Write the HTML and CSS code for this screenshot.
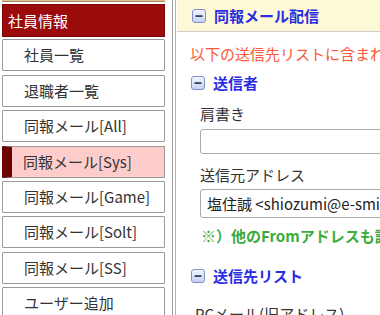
FILE: index.html
```html
<!DOCTYPE html>
<html lang="ja">
<head>
<meta charset="utf-8">
<link rel="stylesheet" href="styles.css">
</head>
<body>
<div class="page">
  <nav class="sidebar">
    <div class="top-stub"></div>
    <div class="side-head">社員情報</div>
    <ul class="menu">
      <li class="item">社員一覧</li>
      <li class="item">退職者一覧</li>
      <li class="item">同報メール[All]</li>
      <li class="item active">同報メール[Sys]</li>
      <li class="item">同報メール[Game]</li>
      <li class="item">同報メール[Solt]</li>
      <li class="item">同報メール[SS]</li>
      <li class="item">ユーザー追加</li>
    </ul>
  </nav>
  <div class="divider"></div>
  <main class="content">
    <div class="page-head">
      <svg class="icon" width="14" height="14" viewBox="0 0 14 14"><defs><linearGradient id="g1" x1="0" y1="0" x2="0" y2="1"><stop offset="0" stop-color="#f4f7ff"/><stop offset="1" stop-color="#c4d0f0"/></linearGradient></defs><rect x="0.5" y="0.5" width="13" height="13" rx="2.5" fill="url(#g1)" stroke="#7f8fcc"/><rect x="3.5" y="6.2" width="7" height="1.8" fill="#3a4060"/></svg>
      <span>同報メール配信</span>
    </div>
    <div class="body">
      <p class="note">以下の送信先リストに含まれる社員へメールを送信します</p>
      <h2 class="sec">
        <svg class="icon" width="14" height="14" viewBox="0 0 14 14"><defs><linearGradient id="g2" x1="0" y1="0" x2="0" y2="1"><stop offset="0" stop-color="#f4f7ff"/><stop offset="1" stop-color="#c4d0f0"/></linearGradient></defs><rect x="0.5" y="0.5" width="13" height="13" rx="2.5" fill="url(#g2)" stroke="#7f8fcc"/><rect x="3.5" y="6.2" width="7" height="1.8" fill="#3a4060"/></svg>
        <span>送信者</span>
      </h2>
      <div class="label l1">肩書き</div>
      <div class="input in1"></div>
      <div class="label l2">送信元アドレス</div>
      <div class="input in2">塩住誠 &lt;shiozumi@e-smile.co.jp&gt;</div>
      <div class="green">※）他のFromアドレスも設定できます</div>
      <h2 class="sec sec2">
        <svg class="icon" width="14" height="14" viewBox="0 0 14 14"><defs><linearGradient id="g3" x1="0" y1="0" x2="0" y2="1"><stop offset="0" stop-color="#f4f7ff"/><stop offset="1" stop-color="#c4d0f0"/></linearGradient></defs><rect x="0.5" y="0.5" width="13" height="13" rx="2.5" fill="url(#g3)" stroke="#7f8fcc"/><rect x="3.5" y="6.2" width="7" height="1.8" fill="#3a4060"/></svg>
        <span>送信先リスト</span>
      </h2>
      <div class="pc">PCメール(旧アドレス)</div>
    </div>
  </main>
</div>
</body>
</html>
```

FILE: styles.css
```css
html, body {
  margin: 0;
  padding: 0;
  background: #fff;
}
body {
  width: 380px;
  height: 315px;
  overflow: hidden;
  font-family: "Noto Sans CJK JP", "Noto Sans", sans-serif;
  font-size: 15px;
  color: #333;
}
.page {
  display: flex;
  align-items: flex-start;
  height: 315px;
  overflow: hidden;
}
.sidebar {
  width: 163px;
  margin-left: 2px;
  flex: none;
}
.top-stub {
  height: 1px;
  background: #d6c29a;
  border-bottom: 1px solid #a88c5c;
}
.side-head {
  margin-top: 2px;
  height: 33px;
  box-sizing: border-box;
  background: #9c0b0b;
  border: 1px solid #7a0606;
  color: #fff;
  line-height: 31px;
  padding-left: 5px;
}
.menu {
  list-style: none;
  margin: 0;
  padding: 0;
}
.item {
  height: 32px;
  box-sizing: border-box;
  margin-top: 3.43px;
  border: 1px solid #9a9a9a;
  border-radius: 1px;
  background: #fff;
  line-height: 30px;
  padding-left: 21px;
  color: #333;
  white-space: nowrap;
}
.menu .item:first-child {
  margin-top: 2.3px;
}
.item.active {
  background: #ffcccc;
  border-left: 10px solid #6b0303;
  padding-left: 11px;
}
.divider {
  flex: none;
  width: 2px;
  height: 315px;
  margin-left: 7px;
  border-left: 1px solid #9c9c9c;
  border-right: 1px solid #b0b0b0;
}
.content {
  flex: 1;
  margin-left: 1px;
  min-width: 0;
  overflow: hidden;
  white-space: nowrap;
}
.page-head {
  height: 31px;
  background: #fdf9d6;
  border-bottom: 1px solid #cfcfcf;
  display: flex;
  align-items: center;
  gap: 8px;
  padding-left: 15px;
  box-sizing: content-box;
  color: #2a2ee0;
  font-weight: bold;
}
.icon {
  flex: none;
  display: block;
}
.body {
  padding-left: 13px;
}
.note {
  margin: 10.5px 0 0;
  line-height: 22px;
  color: #fb5a3a;
}
.sec {
  margin: 7.5px 0 0;
  font-size: 15px;
  line-height: 22px;
  font-weight: bold;
  color: #2a2ee0;
  display: flex;
  align-items: center;
  gap: 8px;
  padding-left: 1px;
}
.label {
  padding-left: 10px;
  line-height: 22px;
  color: #333;
}
.l1 { margin-top: 9px; }
.l2 { margin-top: 10px; }
.input {
  margin-left: 10px;
  border: 1px solid #ababab;
  border-radius: 3px;
  box-sizing: border-box;
  width: 240px;
  color: #222;
}
.in1 {
  margin-top: 4px;
  height: 25px;
}
.in2 {
  margin-top: 3px;
  height: 29px;
  line-height: 27px;
  padding-left: 6px;
}
.green {
  margin-top: 6.5px;
  padding-left: 11px;
  line-height: 22px;
  color: #3bab3b;
  font-weight: bold;
}
.sec2 {
  margin-top: 18px;
}
.pc {
  margin-top: 16.5px;
  padding-left: 5px;
  line-height: 22px;
  color: #333;
}
```
